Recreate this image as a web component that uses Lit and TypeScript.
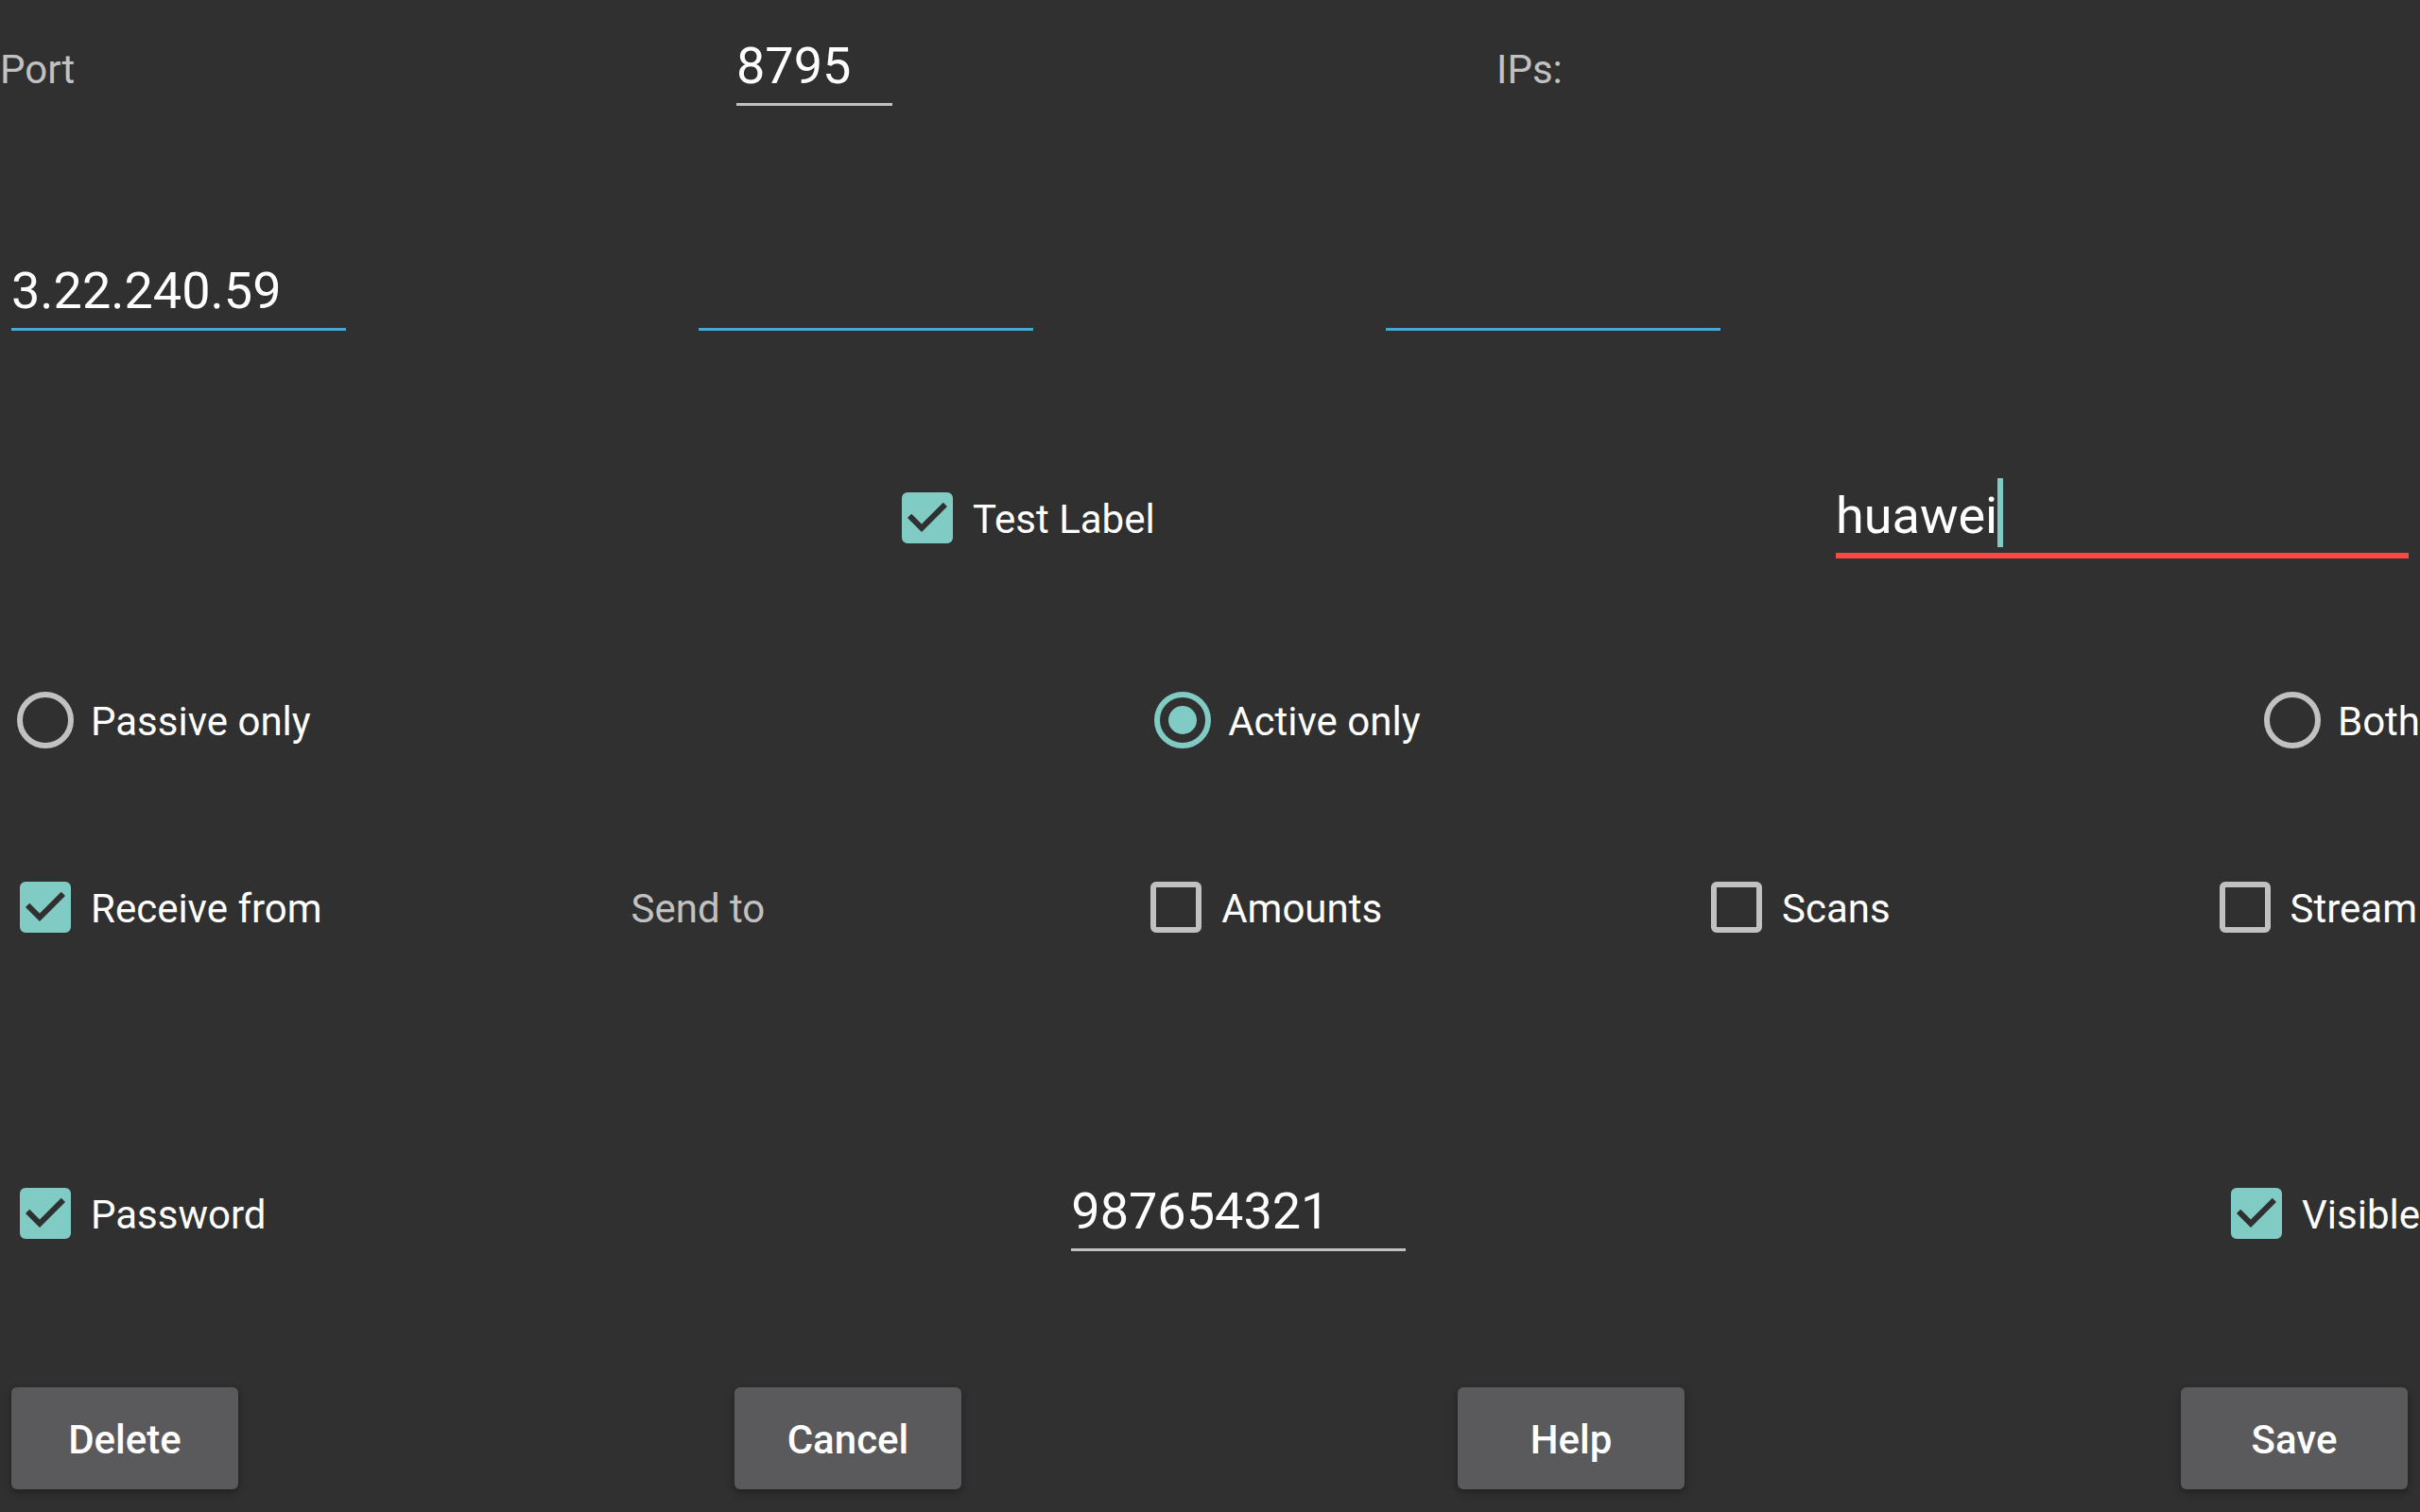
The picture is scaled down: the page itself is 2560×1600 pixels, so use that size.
import { LitElement, html, css, nothing } from "lit";
import { customElement, property } from "lit/decorators.js";

const base = css`
  * {
    box-sizing: border-box;
  }
  input,
  button {
    margin: 0;
    font-family: inherit;
    color: inherit;
  }
`;

/** Tick box or radio button with its label on the right. */
@customElement("choice-control")
export class ChoiceControl extends LitElement {
  @property() type: "checkbox" | "radio" = "checkbox";
  @property() name = "";
  @property() label = "";
  @property({ type: Boolean }) checked = false;

  static styles = [
    base,
    css`
      :host {
        display: block;
      }
      .choice {
        display: flex;
        align-items: center;
        white-space: nowrap;
      }
      .mark {
        display: grid;
        width: 96px;
        place-items: center;
      }
      .box,
      .tick,
      .dot {
        grid-area: 1 / 1;
      }
      .box {
        appearance: none;
        width: 54px;
        height: 54px;
        border: 6px solid #c1c1c1;
        border-radius: 6px;
      }
      .box.radio {
        width: 60px;
        height: 60px;
        border-radius: 50%;
      }
      .box:checked {
        border-color: #80cbc4;
      }
      .box.checkbox:checked {
        background: #80cbc4;
      }
      .tick,
      .dot {
        display: none;
        pointer-events: none;
      }
      .tick {
        width: 54px;
        height: 54px;
        fill: #303030;
      }
      .dot {
        width: 30px;
        height: 30px;
        border-radius: 50%;
        background: #80cbc4;
      }
      .box:checked + .tick,
      .box:checked + .dot {
        display: block;
      }
      .text {
        padding-top: 4px;
      }
    `,
  ];

  render() {
    return html`
      <label class="choice">
        <span class="mark">
          <input
            class="box ${this.type}"
            type=${this.type}
            name=${this.name}
            .checked=${this.checked}
          />
          ${this.type === "checkbox"
            ? html`<svg class="tick" viewBox="3 3 18 18" aria-hidden="true">
                <path d="M10 17l-5-5 1.41-1.41L10 14.17l7.59-7.59L19 8z" />
              </svg>`
            : html`<span class="dot"></span>`}
        </span>
        <span class="text">${this.label}</span>
      </label>
    `;
  }
}

/** Single-line text box with an underline. */
@customElement("line-field")
export class LineField extends LitElement {
  @property() value = "";
  @property() label = "";
  @property() tone: "plain" | "address" | "error" = "plain";
  @property() size: "short" | "medium" | "fill" = "medium";
  @property({ type: Boolean }) editing = false;

  static styles = [
    base,
    css`
      :host {
        display: block;
      }
      .field {
        position: relative;
        margin: 0 12px;
      }
      .short {
        width: 165px;
      }
      .medium {
        width: 354px;
      }
      .input {
        display: block;
        width: 100%;
        height: 80px;
        padding: 0 0 3px;
        border: 0;
        border-bottom: 3px solid #c1c1c1;
        border-radius: 0;
        outline: 0;
        background: none;
        font-size: 54px;
        caret-color: #80cbc4;
      }
      .input.address {
        border-color: #44a9d6;
      }
      .input.error {
        height: 86px;
        padding: 0;
        border-bottom: 6px solid #fb4843;
      }
      .caret {
        position: absolute;
        top: 1px;
        left: 171px;
        width: 6px;
        height: 73px;
        background: #80cbc4;
      }
    `,
  ];

  render() {
    return html`
      <div class="field ${this.size}">
        <input class="input ${this.tone}" type="text" aria-label=${this.label} .value=${this.value} />
        ${this.editing ? html`<span class="caret"></span>` : nothing}
      </div>
    `;
  }
}

@customElement("app-root")
export class AppRoot extends LitElement {
  static styles = [
    base,
    css`
      :host {
        display: block;
        background: #303030;
        color: #ffffff;
        font-family: Roboto, "Noto Sans", sans-serif;
        font-size: 42px;
        line-height: 50px;
      }
      .form {
        display: grid;
        grid-template-rows: 238fr 238fr 214fr 198fr 324fr 238fr 108fr;
        min-height: 100vh;
        padding: 18px 0 24px;
      }
      .row {
        display: flex;
        align-items: center;
        justify-content: space-between;
        height: 108px;
      }
      .row.port,
      .row.addresses,
      .row.name {
        display: grid;
      }
      .row.port {
        grid-template-columns: 767fr 816fr 977fr;
      }
      .row.addresses {
        grid-template-columns: 727fr 727fr 1106fr;
      }
      .row.name {
        grid-template-columns: 933fr 997fr 630fr;
      }
      .row.transfer {
        padding-right: 3px;
      }
      .row.buttons {
        padding: 0 13px 0 12px;
      }
      .caption {
        padding-top: 4px;
        color: #c1c1c1;
      }
      .caption.send {
        padding-right: 60px;
      }
      .button {
        width: 240px;
        height: 108px;
        padding: 4px 0 0;
        border: 0;
        border-radius: 6px;
        background: #5a595b;
        box-shadow: 0 3px 8px rgba(0, 0, 0, 0.35);
        font-size: 42px;
        font-weight: 500;
        line-height: 50px;
      }
    `,
  ];

  render() {
    return html`
      <form class="form" @submit=${(e: Event) => e.preventDefault()}>
        <div class="row port">
          <span class="caption">Port</span>
          <line-field label="Port" size="short" value="8795"></line-field>
          <span class="caption">IPs:</span>
        </div>
        <div class="row addresses">
          <line-field label="IP 1" tone="address" value="3.22.240.59"></line-field>
          <line-field label="IP 2" tone="address"></line-field>
          <line-field label="IP 3" tone="address"></line-field>
        </div>
        <div class="row name">
          <span></span>
          <choice-control label="Test Label" checked></choice-control>
          <line-field label="Label" tone="error" size="fill" value="huawei" editing></line-field>
        </div>
        <div class="row" role="radiogroup" aria-label="Mode">
          <choice-control type="radio" name="mode" label="Passive only"></choice-control>
          <choice-control type="radio" name="mode" label="Active only" checked></choice-control>
          <choice-control type="radio" name="mode" label="Both"></choice-control>
        </div>
        <div class="row transfer">
          <choice-control label="Receive from" checked></choice-control>
          <span class="caption send">Send to</span>
          <choice-control label="Amounts"></choice-control>
          <choice-control label="Scans"></choice-control>
          <choice-control label="Stream"></choice-control>
        </div>
        <div class="row">
          <choice-control label="Password" checked></choice-control>
          <line-field label="Password" value="987654321"></line-field>
          <choice-control label="Visible" checked></choice-control>
        </div>
        <div class="row buttons">
          ${["Delete", "Cancel", "Help", "Save"].map(
            (text) => html`<button class="button" type="button">${text}</button>`,
          )}
        </div>
      </form>
    `;
  }
}
